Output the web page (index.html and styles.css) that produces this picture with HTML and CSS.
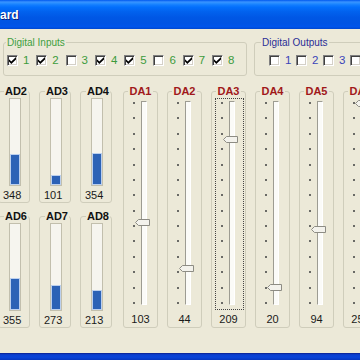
FILE: index.html
```html
<!DOCTYPE html>
<html>
<head>
<meta charset="utf-8">
<link rel="stylesheet" href="styles.css">
</head>
<body>
<div class="window">
  <div class="titlebar"><span class="title">ard</span></div>
  <div class="client">
    <div class="digital-row">
      <fieldset class="group dig dig-in">
        <legend>Digital Inputs</legend>
        <div class="checks">
          <label class="chk"><span class="box"><svg viewBox="0 0 7 7"><polygon points="0,2.2 2.3,4.5 7,0 7,2.4 2.3,7 0,4.6"/></svg></span><span class="num">1</span></label>
          <label class="chk"><span class="box"><svg viewBox="0 0 7 7"><polygon points="0,2.2 2.3,4.5 7,0 7,2.4 2.3,7 0,4.6"/></svg></span><span class="num">2</span></label>
          <label class="chk"><span class="box"></span><span class="num">3</span></label>
          <label class="chk"><span class="box"><svg viewBox="0 0 7 7"><polygon points="0,2.2 2.3,4.5 7,0 7,2.4 2.3,7 0,4.6"/></svg></span><span class="num">4</span></label>
          <label class="chk"><span class="box"><svg viewBox="0 0 7 7"><polygon points="0,2.2 2.3,4.5 7,0 7,2.4 2.3,7 0,4.6"/></svg></span><span class="num">5</span></label>
          <label class="chk"><span class="box"></span><span class="num">6</span></label>
          <label class="chk"><span class="box"><svg viewBox="0 0 7 7"><polygon points="0,2.2 2.3,4.5 7,0 7,2.4 2.3,7 0,4.6"/></svg></span><span class="num">7</span></label>
          <label class="chk"><span class="box"><svg viewBox="0 0 7 7"><polygon points="0,2.2 2.3,4.5 7,0 7,2.4 2.3,7 0,4.6"/></svg></span><span class="num">8</span></label>
        </div>
      </fieldset>
      <fieldset class="group dig dig-out">
        <legend>Digital Outputs</legend>
        <div class="checks">
          <label class="chk"><span class="box"></span><span class="num">1</span></label>
          <label class="chk"><span class="box"></span><span class="num">2</span></label>
          <label class="chk"><span class="box"></span><span class="num">3</span></label>
          <label class="chk"><span class="box"></span><span class="num">4</span></label>
        </div>
      </fieldset>
    </div>

    <div class="main-row">
      <div class="ad-grid">
        <fieldset class="group ad"><legend>AD2</legend><div class="track"><div class="bar" style="height:29.3px"></div></div><div class="val">348</div></fieldset>
        <fieldset class="group ad"><legend>AD3</legend><div class="track"><div class="bar" style="height:8.5px"></div></div><div class="val">101</div></fieldset>
        <fieldset class="group ad"><legend>AD4</legend><div class="track"><div class="bar" style="height:29.8px"></div></div><div class="val">354</div></fieldset>
        <fieldset class="group ad"><legend>AD6</legend><div class="track"><div class="bar" style="height:29.8px"></div></div><div class="val">355</div></fieldset>
        <fieldset class="group ad"><legend>AD7</legend><div class="track"><div class="bar" style="height:23px"></div></div><div class="val">273</div></fieldset>
        <fieldset class="group ad"><legend>AD8</legend><div class="track"><div class="bar" style="height:17.9px"></div></div><div class="val">213</div></fieldset>
      </div>

      <div class="da-row">
        <fieldset class="group da"><legend>DA1</legend>
          <div class="wrap"><div class="slider">
            <div class="ticks"><i></i><i></i><i></i><i></i><i></i><i></i><i></i><i></i><i></i><i></i><i></i><i></i><i></i><i></i></div>
            <div class="groove"></div>
            <svg class="thumb" style="top:117.7px" viewBox="0 0 15 7"><polygon points="0.5,3.5 3.5,0.5 14.5,0.5 14.5,6.5 3.5,6.5"/></svg>
          </div></div>
          <div class="val">103</div>
        </fieldset>
        <fieldset class="group da"><legend>DA2</legend>
          <div class="wrap"><div class="slider">
            <div class="ticks"><i></i><i></i><i></i><i></i><i></i><i></i><i></i><i></i><i></i><i></i><i></i><i></i><i></i><i></i></div>
            <div class="groove"></div>
            <svg class="thumb" style="top:164px" viewBox="0 0 15 7"><polygon points="0.5,3.5 3.5,0.5 14.5,0.5 14.5,6.5 3.5,6.5"/></svg>
          </div></div>
          <div class="val">44</div>
        </fieldset>
        <fieldset class="group da focus"><legend>DA3</legend>
          <div class="wrap"><div class="slider">
            <div class="ticks"><i></i><i></i><i></i><i></i><i></i><i></i><i></i><i></i><i></i><i></i><i></i><i></i><i></i><i></i></div>
            <div class="groove"></div>
            <svg class="thumb" style="top:34.6px" viewBox="0 0 15 7"><polygon points="0.5,3.5 3.5,0.5 14.5,0.5 14.5,6.5 3.5,6.5"/></svg>
          </div></div>
          <div class="val">209</div>
        </fieldset>
        <fieldset class="group da"><legend>DA4</legend>
          <div class="wrap"><div class="slider">
            <div class="ticks"><i></i><i></i><i></i><i></i><i></i><i></i><i></i><i></i><i></i><i></i><i></i><i></i><i></i><i></i></div>
            <div class="groove"></div>
            <svg class="thumb" style="top:182.8px" viewBox="0 0 15 7"><polygon points="0.5,3.5 3.5,0.5 14.5,0.5 14.5,6.5 3.5,6.5"/></svg>
          </div></div>
          <div class="val">20</div>
        </fieldset>
        <fieldset class="group da"><legend>DA5</legend>
          <div class="wrap"><div class="slider">
            <div class="ticks"><i></i><i></i><i></i><i></i><i></i><i></i><i></i><i></i><i></i><i></i><i></i><i></i><i></i><i></i></div>
            <div class="groove"></div>
            <svg class="thumb" style="top:124.8px" viewBox="0 0 15 7"><polygon points="0.5,3.5 3.5,0.5 14.5,0.5 14.5,6.5 3.5,6.5"/></svg>
          </div></div>
          <div class="val">94</div>
        </fieldset>
        <fieldset class="group da"><legend>DA6</legend>
          <div class="wrap"><div class="slider">
            <div class="ticks"><i></i><i></i><i></i><i></i><i></i><i></i><i></i><i></i><i></i><i></i><i></i><i></i><i></i><i></i></div>
            <div class="groove"></div>
            <svg class="thumb" style="top:-1.5px" viewBox="0 0 15 7"><polygon points="0.5,3.5 3.5,0.5 14.5,0.5 14.5,6.5 3.5,6.5"/></svg>
          </div></div>
          <div class="val">255</div>
        </fieldset>
      </div>
    </div>
  </div>
  <div class="frame-bottom"></div>
</div>
</body>
</html>
```

FILE: styles.css
```css
html, body {
  margin: 0;
  height: 360px;
  overflow: hidden;
  background: #ece9d8;
}

body {
  font-family: "Liberation Sans", Arial, sans-serif;
}

.window {
  width: 420px;
  height: 360px;
  display: flex;
  flex-direction: column;
}

.titlebar {
  flex: none;
  height: 29px;
  box-sizing: border-box;
  padding-top: 9px;
  background: linear-gradient(180deg, #0058ee 0, #3a93ff 7%, #288eff 11%, #127dff 17%, #036ffc 25%, #0262ee 40%, #0057e5 60%, #0054e3 80%, #0055eb 92%, #0048d0 100%);
}

.title {
  display: block;
  margin-left: 0;
  color: #fff;
  font: bold 12px/13px "Liberation Sans", Arial, sans-serif;
  text-shadow: 1px 1px 0 #0f1f7a;
}

.client {
  flex: 1;
  background: #ece9d8;
  padding-top: 8px;
}

.frame-bottom {
  flex: none;
  height: 7px;
  background: linear-gradient(180deg, #0a1f8c 0, #0a3fd0 25%, #0843d8 60%, #0636c0 100%);
}

/* group boxes */
.group {
  margin: 0;
  border: 1px solid #cfcdbb;
  border-radius: 3px;
  min-width: 0;
  box-sizing: border-box;
}

.group legend {
  padding: 0 1px;
}

/* digital row */
.digital-row {
  display: flex;
  align-items: flex-start;
}

.dig {
  padding: 7px 0 9px 2px;
}

.dig legend {
  font-size: 10px;
  line-height: 11px;
  margin-left: 0;
}

.dig-in {
  margin-left: 3px;
  width: 244px;
}

.dig-in legend {
  color: #3e9f3e;
}

.dig-out {
  margin-left: 7px;
  width: 140px;
  padding-left: 6px;
}

.dig-out legend {
  color: #2a2e96;
}

.checks {
  display: flex;
  height: 11px;
}

.dig-in .checks {
  padding-left: 1px;
}

.dig-out .checks {
  padding-left: 8px;
}

.chk {
  flex: none;
  display: flex;
  align-items: center;
  gap: 5px;
}

.dig-in .chk {
  width: 29.3px;
}

.dig-out .chk {
  width: 27px;
}

.box {
  width: 11px;
  height: 11px;
  box-sizing: border-box;
  border: 1px solid;
  border-color: #808080 #ffffff #ffffff #808080;
  box-shadow: inset 1px 1px 0 #404040, inset -1px -1px 0 #d4d0c8;
  background: #fff;
  display: flex;
  align-items: center;
  justify-content: center;
}

.box svg {
  width: 7px;
  height: 7px;
  fill: #000;
}

.num {
  font-size: 11.5px;
  line-height: 11px;
}

.dig-in .num {
  color: #3c9b3c;
}

.dig-out .num {
  color: #3a44b8;
}

/* main area */
.main-row {
  display: flex;
  align-items: stretch;
  margin-top: 9px;
}

.ad-grid {
  display: grid;
  grid-template-columns: repeat(3, 32px);
  column-gap: 9px;
  row-gap: 7px;
  margin-left: -2px;
}

.ad {
  padding: 1px 0 1px 4px;
}

.ad legend,
.da legend {
  margin: 0 auto;
  font: bold 11px/12px "Liberation Sans", Arial, sans-serif;
}

.ad legend {
  color: #111;
}

.da legend {
  color: #a0181a;
}

.track {
  width: 12px;
  height: 88px;
  box-sizing: border-box;
  margin-left: 6px;
  padding: 1px 0;
  border: 1px solid #c2bfad;
  background: #f6f5ef;
  display: flex;
  align-items: flex-end;
  justify-content: center;
}

.bar {
  width: 8px;
  background: #2c62b6;
  box-shadow: 0 0 0 1px #bcd0ee;
}

.val {
  margin-top: 3px;
  font-size: 11px;
  line-height: 12px;
  color: #1a1a1a;
}

.da-row {
  display: flex;
  gap: 9px;
  margin-left: 11px;
}

.da {
  flex: none;
  width: 35px;
  padding: 0 0 2px 0;
}

.wrap {
  width: 29px;
  box-sizing: border-box;
  margin: 1px 0 0 3px;
  padding: 2px 0 4px 0;
  border: 1px dotted transparent;
}

.da.focus .wrap {
  border-color: #444;
}

.slider {
  position: relative;
  height: 204px;
  display: flex;
  gap: 6px;
  padding-left: 5px;
}

.ticks {
  width: 2px;
  box-sizing: border-box;
  padding: 1px 0;
  display: flex;
  flex-direction: column;
  justify-content: space-between;
}

.ticks i {
  display: block;
  width: 2px;
  height: 2px;
  background: #6a6a66;
}

.groove {
  width: 6px;
  box-sizing: border-box;
  border: 1px solid;
  border-color: #9d9c92 #ffffff #ffffff #9d9c92;
  background: #fbfbf8;
}

.thumb {
  position: absolute;
  left: 7px;
  width: 15px;
  height: 7px;
  fill: #f3f2ec;
  stroke: #8d8c84;
  stroke-width: 1;
}

.da .val {
  text-align: center;
}
```
